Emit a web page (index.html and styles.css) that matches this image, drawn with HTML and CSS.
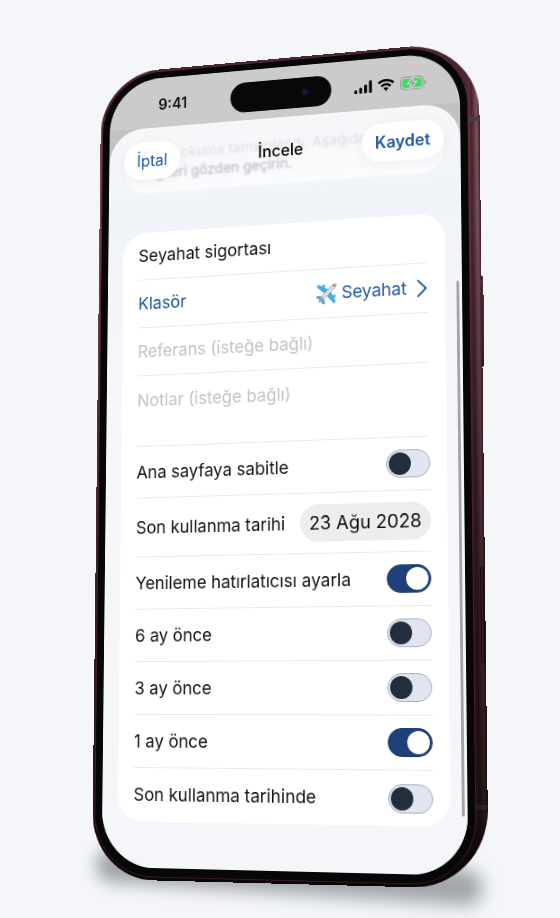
FILE: index.html
```html
<!DOCTYPE html>
<html lang="tr">
<head>
  <meta charset="UTF-8" />
  <title>İncele</title>
  <meta name="viewport" content="width=device-width, initial-scale=1.0" />
  <link rel="stylesheet" href="styles.css">
</head>
<body>
  <main class="stage">
    <div class="phone">
      <div class="floor-shadow"></div>
      <div class="side-button power"></div>
      <div class="frame">
        <div class="antenna top"></div>
        <div class="antenna bottom"></div>
        <div class="camera-button"></div>
        <div class="bezel">
          <div class="screen">
            <div class="status-bar">
              <span class="time">9:41</span>
              <div class="island"><span class="lens"></span></div>
              <div class="status-icons">
                <svg width="20" height="14" viewBox="0 0 20 14"><rect x="0" y="10" width="3.200" height="4" rx="1"/><rect x="5.500" y="7.500" width="3.200" height="6.500" rx="1"/><rect x="11" y="4.500" width="3.200" height="9.500" rx="1"/><rect x="16.500" y="0" width="3.200" height="14" rx="1"/></svg>
                <svg width="19" height="14" viewBox="0 0 19 14"><path d="M9.500 0C5.900 0 2.700 1.400.300 3.600L2.100 5.500C4 3.700 6.600 2.600 9.500 2.600s5.500 1.100 7.400 2.900l1.800-1.900C16.300 1.400 13.100 0 9.500 0zM9.500 4.600c-2.300 0-4.400.900-6 2.400l1.800 1.900c1.100-1 2.600-1.700 4.200-1.700s3.100.700 4.200 1.700l1.800-1.900c-1.600-1.500-3.700-2.400-6-2.400zM9.500 9.200c-1.100 0-2 .400-2.800 1.100L9.500 13.600l2.800-3.300c-.800-.700-1.700-1.100-2.800-1.100z"/></svg>
                <svg width="30" height="16" viewBox="0 0 30 16"><rect x=".6" y="1.100" width="25.500" height="13.600" rx="4.500" fill="none" stroke="#999" stroke-width="1.100"/><path d="M27.500 5.500v5c1-.300 1.700-1.300 1.700-2.500s-.700-2.200-1.700-2.500z" fill="#999"/><rect x="2.500" y="3" width="21.700" height="9.800" rx="3" fill="#3ddc62"/><path d="M15.800 0L8.200 8.600h4.300L10.500 15.500l8.300-9h-4.600z" fill="#8b8f8b" stroke="#cbcbcb" stroke-width="1.600"/></svg>
              </div>
            </div>

            <div class="sheet">
              <div class="intro">Belge okuma tamamlandı. Aşağıdaki <b>bilgileri gözden geçirin.</b></div>
              <header class="nav">
                <button class="pill cancel" type="button">İptal</button>
                <h1>İncele</h1>
                <button class="pill save" type="button">Kaydet</button>
              </header>

              <form class="card">
                <div class="row field"><input type="text" aria-label="Başlık" value="Seyahat sigortası"></div>
                <div class="row field">
                  <label class="link" for="folder">Klasör</label>
                  <button class="folder" id="folder" type="button">
                    <svg class="plane" width="24" height="24" viewBox="0 0 24 24">
                      <g fill="#3fb0e8" stroke="#1d82bb" stroke-width=".5">
                        <path d="M14.500 8L3.500 2.200 1 3.600l9.500 8.400z"/>
                        <path d="M16 9.500L21.800 20.500 20.400 23l-8.400-9.500z"/>
                        <path d="M6.500 15L1.500 14.300.8 16 5.500 19z"/>
                        <path d="M9 17.500L9.700 22.500 8 23.200 5 18.500z"/>
                        <path d="M7.500 2.600l1.800-.6 1 1.800-1.600.8zM21.400 16.500l.6-1.800-1.800-1-.8 1.600z"/>
                      </g>
                      <path d="M3.500 20.500C4 18 6.500 14.800 9.500 11.500L16.500 4.300C18.500 2.300 21.500.8 22.800 1.400 23.400 2.700 21.800 5.500 19.800 7.500L12.500 14.500C9.200 17.500 6 20 3.500 20.500z" fill="#dcdfe4" stroke="#8c949e" stroke-width=".7"/>
                      <path d="M19 3.500l1.800 1.800.8-1.700-1-1z" fill="#55606c"/>
                      <path d="M3 21l4.800-4.800" stroke="#6f7985" stroke-width="1.200"/>
                    </svg>
                    <span>Seyahat</span>
                    <svg class="chevron" width="11" height="20" viewBox="0 0 11 20"><path d="M1.200 1.500L9.800 10l-8.600 8.500" fill="none" stroke="currentColor" stroke-width="1.800" stroke-linecap="round" stroke-linejoin="round"/></svg>
                  </button>
                </div>
                <div class="row field"><input type="text" aria-label="Referans" placeholder="Referans (isteğe bağlı)"></div>
                <div class="row notes"><textarea aria-label="Notlar" rows="2" placeholder="Notlar (isteğe bağlı)"></textarea></div>
                <div class="row"><label for="pin">Ana sayfaya sabitle</label><input class="switch" id="pin" type="checkbox"></div>
                <div class="row date"><label for="expiry">Son kullanma tarihi</label><button class="date-pill" id="expiry" type="button">23 Ağu 2028</button></div>
                <div class="row"><label for="remind">Yenileme hatırlatıcısı ayarla</label><input class="switch" id="remind" type="checkbox" checked></div>
                <div class="row"><label for="m6">6 ay önce</label><input class="switch" id="m6" type="checkbox"></div>
                <div class="row"><label for="m3">3 ay önce</label><input class="switch" id="m3" type="checkbox"></div>
                <div class="row"><label for="m1">1 ay önce</label><input class="switch" id="m1" type="checkbox" checked></div>
                <div class="row"><label for="day">Son kullanma tarihinde</label><input class="switch" id="day" type="checkbox"></div>
              </form>
              <div class="scrollbar"></div>
            </div>
          </div>
        </div>
      </div>
    </div>
  </main>
</body>
</html>
```
FILE: styles.css
```css
* {
  box-sizing: border-box;
}

body {
  margin: 0;
  background: #f4f6fa;
  font-family: Inter, "Liberation Sans", sans-serif;
  font-size: 18px;
  color: #111;
}

button, input, textarea {
  font: inherit;
  color: inherit;
  border: none;
  background: none;
  padding: 0;
  margin: 0;
}

.stage {
  min-height: 100vh;
  display: flex;
  align-items: center;
  justify-content: center;
  overflow: hidden;
}

/* the phone is laid out flat, then turned in perspective around the screen's corner */
.phone {
  position: relative;
  flex: none;
  transform-origin: 11px 10px;
  transform: matrix3d(0.822055, -0.081984, 0, -0.00012088, -0.011424, 0.852313, 0, -0.00005327, 0, 0, 1, 0, 36.3, 61.5, 0, 1);
}

.floor-shadow {
  position: absolute;
  left: 4px;
  right: 6px;
  bottom: -10px;
  height: 36px;
  border-radius: 18px;
  background: rgba(60, 64, 72, 0.45);
  filter: blur(9px);
  transform: rotate(2deg);
}

.frame {
  position: relative;
  padding: 3px 13px 4px 3px;
  border-radius: 70px 80px 80px 70px;
  background:
    linear-gradient(to bottom, rgba(10, 4, 6, 0) 20%, rgba(10, 4, 6, 0.5) 60%, rgba(10, 4, 6, 0.75) 92%, #0a0506 98%),
    linear-gradient(to right, #7c505c 0, #4a2632 3px, #4a2632 calc(100% - 13px), #6b2f40 calc(100% - 12px), #45202b calc(100% - 9px), #7a555c calc(100% - 3px), #3b1f26 100%);
}

.side-button {
  position: absolute;
  right: -2px;
  width: 8px;
  border-radius: 3px;
}

.power {
  top: 258px;
  height: 98px;
  background: linear-gradient(to bottom, #1a0b0f, #56303a 6%, #3c1f27 92%, #0a0405);
}

.camera-button {
  position: absolute;
  right: 1px;
  top: 567px;
  width: 4px;
  height: 100px;
  border-radius: 3px;
  border: 1px solid #12070a;
  background: #341c22;
}

.antenna {
  position: absolute;
  right: 0;
  width: 14px;
  height: 5px;
  background: #4d3b40;
}

.antenna.top {
  top: 84px;
}

.antenna.bottom {
  bottom: 80px;
  opacity: 0.3;
}

.bezel {
  position: relative;
  padding: 7px 8px 9px;
  border-radius: 67px;
  background: #070707;
  box-shadow: 0 0 0 1px rgba(94, 38, 54, 0.6);
}

.screen {
  width: 402px;
  min-height: 874px;
  display: flex;
  flex-direction: column;
  border-radius: 60px;
  overflow: hidden;
  background: linear-gradient(to bottom, #cbcbcb 57px, #c1c2c4 57px);
}

.status-bar {
  height: 57px;
  padding: 4px 36px 0;
  display: grid;
  grid-template-columns: 1fr 116px 1fr;
  align-items: center;
}

.time {
  padding-left: 22px;
  font-size: 17px;
  font-weight: 600;
}

.island {
  height: 34px;
  border-radius: 17px;
  background: #080808;
  display: flex;
  align-items: center;
  justify-content: flex-end;
  padding-right: 26px;
}

.lens {
  width: 8px;
  height: 8px;
  border-radius: 50%;
  background: radial-gradient(circle, #191e4a, #0b0d1c);
}

.status-icons {
  display: flex;
  align-items: center;
  justify-content: flex-end;
  gap: 6px;
}

.sheet {
  position: relative;
  flex: 1;
  padding: 16px 18px 49px;
  border-radius: 40px 40px 0 0;
  background: linear-gradient(to bottom, #f6f7f9, #f0f3f8 12%, #f4f6fa 30%);
  overflow: hidden;
}

/* scrolled text showing through the navigation bar */
.intro {
  position: absolute;
  left: 18px;
  right: 18px;
  top: 0;
  padding: 19px 0 12px 20px;
  border-radius: 0 0 26px 26px;
  background: linear-gradient(to bottom, rgba(250, 251, 252, 0), #fafbfc);
  color: rgba(70, 78, 90, 0.16);
  font-size: 16px;
  line-height: 22px;
  filter: blur(1px);
}

.intro b {
  display: block;
  font-weight: 400;
  color: rgba(70, 78, 90, 0.4);
}

.nav {
  position: relative;
  display: grid;
  grid-template-columns: 1fr auto 1fr;
  align-items: center;
  margin-bottom: 61px;
}

h1 {
  margin: 0;
  font-size: 18px;
  font-weight: 500;
  color: #000;
}

.pill {
  height: 43px;
  padding: 0 15px;
  border-radius: 22px;
  background: rgba(255, 255, 255, 0.95);
  box-shadow: 0 2px 14px rgba(60, 70, 90, 0.06);
  color: #2457a3;
  cursor: pointer;
}

.cancel {
  justify-self: start;
}

.save {
  justify-self: end;
  font-weight: 600;
}

.card {
  padding: 0 18px;
  border-radius: 28px;
  background: #fff;
  font-size: 19px;
}

.row {
  min-height: 57px;
  display: flex;
  align-items: center;
  justify-content: space-between;
  border-bottom: 1px solid #e8e9eb;
  white-space: nowrap;
}

.row:last-child {
  border-bottom: none;
}

.row.field {
  min-height: 54px;
}

.row.date {
  min-height: 65px;
}

.row.notes {
  min-height: 79px;
  align-items: flex-start;
  padding-top: 16px;
}

.row input[type="text"], textarea {
  width: 100%;
  outline: none;
  resize: none;
}

textarea {
  line-height: 24px;
  overflow: hidden;
}

::placeholder {
  color: #c2c3c5;
  opacity: 1;
}

.link, .folder {
  color: #2457a3;
}

.folder {
  display: flex;
  align-items: center;
  gap: 5px;
  cursor: pointer;
}

.chevron {
  margin: 0 2px 0 6px;
}

.switch {
  appearance: none;
  flex: none;
  width: 48px;
  height: 30px;
  padding: 2px;
  border: 1px solid #a8b0c0;
  border-radius: 15px;
  background: #e0e5ef;
  display: flex;
  align-items: center;
  cursor: pointer;
}

.switch::before {
  content: "";
  width: 24px;
  height: 24px;
  border-radius: 50%;
  background: #222e3d;
}

.switch:checked {
  justify-content: flex-end;
  border-color: #1e3f77;
  background: #1e3f77;
}

.switch:checked::before {
  background: #fff;
}

.date-pill {
  height: 40px;
  padding: 0 10px;
  border-radius: 20px;
  background: #ededed;
  font-size: 20px;
  cursor: pointer;
}

.scrollbar {
  position: absolute;
  right: 3px;
  top: 195px;
  bottom: 60px;
  width: 3px;
  border-radius: 2px;
  background: #a2a4a8;
}
```
